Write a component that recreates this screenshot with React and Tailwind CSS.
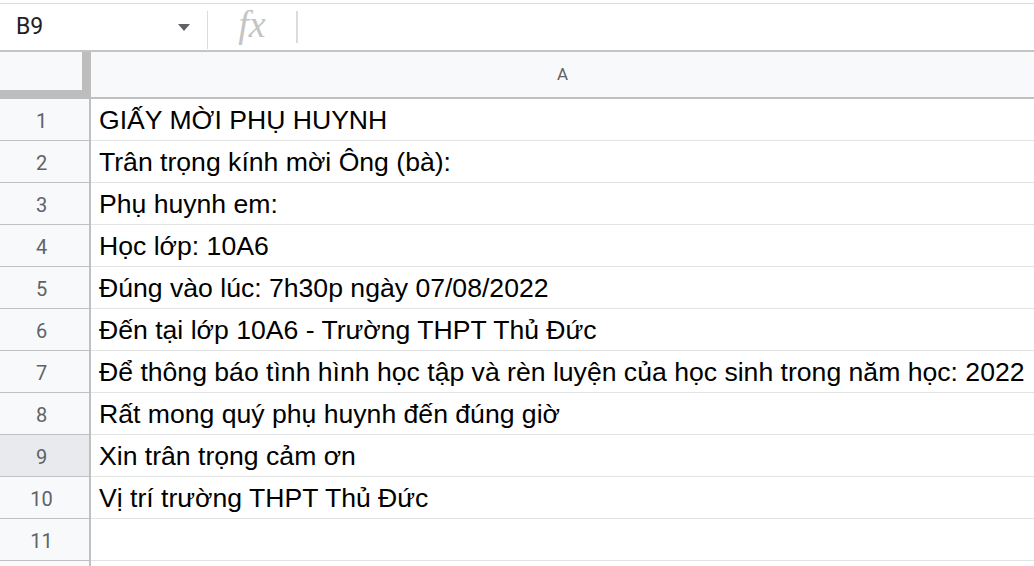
import React from "react"

const rows = [
    "GIẤY MỜI PHỤ HUYNH",
    "Trân trọng kính mời Ông (bà):",
    "Phụ huynh em:",
    "Học lớp: 10A6",
    "Đúng vào lúc: 7h30p ngày 07/08/2022",
    "Đến tại lớp 10A6 - Trường THPT Thủ Đức",
    "Để thông báo tình hình học tập và rèn luyện của học sinh trong năm học: 2022",
    "Rất mong quý phụ huynh đến đúng giờ",
    "Xin trân trọng cảm ơn",
    "Vị trí trường THPT Thủ Đức",
    "",
    "",
]

const App = () => {
    return (
        <div className="w-[1034px] h-[566px] overflow-hidden bg-white pt-[3px] font-['Liberation_Sans',Arial,sans-serif]">
            {/* formula bar */}
            <div className="h-[49px] flex items-center border-t border-[#dadce0] border-b-2 border-b-[#c4c4c4]">
                <div className="w-[207px] h-full flex items-center pl-[16px] pr-[17px]">
                    <span className="text-[23px] text-[#202124] font-['Roboto','Liberation_Sans',sans-serif]">B9</span>
                    <svg className="ml-auto" width="12" height="7" viewBox="0 0 12 7">
                        <path d="M0 0 L12 0 L6 7 Z" fill="#5f6368" />
                    </svg>
                </div>
                <div className="w-px h-[38px] bg-[#dadce0] self-end mb-[1px]" />
                <div className="w-[88px] flex items-center justify-center">
                    <span className="text-[38px] italic text-[#c4c4c4] font-['Liberation_Serif',serif] leading-none -mt-[6px]">fx</span>
                </div>
                <div className="w-[2px] h-[32px] bg-[#dadce0]" />
            </div>

            {/* column header */}
            <div className="h-[47px] flex">
                <div className="w-[91px] h-full bg-[#f8f9fa] border-r-[9px] border-b-[9px] border-[#bdbdbd]" />
                <div className="flex-1 h-full bg-[#f8f9fa] border-b-2 border-[#c0c0c0] flex items-center justify-center">
                    <span className="text-[17px] text-[#5f6368] font-['Roboto','Liberation_Sans',sans-serif]">A</span>
                </div>
            </div>

            {/* rows */}
            {rows.map((text, i) => (
                <div key={i} className="h-[42px] flex">
                    <div
                        className={`w-[91px] h-full border-r-2 border-b border-[#c0c0c0] flex items-center justify-center pr-[6px] pt-[2px] text-[20px] text-[#5f6368] font-['Roboto','Liberation_Sans',sans-serif] ${
                            i === 8 ? "bg-[#e8eaed]" : "bg-[#f8f9fa]"
                        }`}
                    >
                        {i < 11 ? i + 1 : ""}
                    </div>
                    <div className="flex-1 h-full border-b border-[#e2e3e3] flex items-center pl-[8px] pt-[3px] text-[26.6px] text-black whitespace-nowrap overflow-hidden">
                        {text}
                    </div>
                </div>
            ))}
        </div>
    )
}

export default App
